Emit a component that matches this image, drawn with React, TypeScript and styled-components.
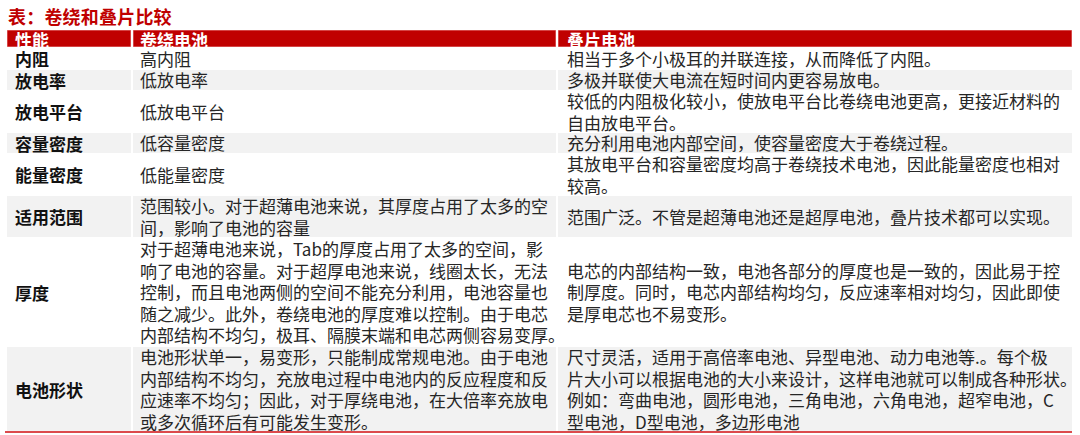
import React, { FunctionComponent } from 'react';
import styled, { createGlobalStyle } from 'styled-components';

const GlobalStyle = createGlobalStyle`
  html, body {
    margin: 0;
    padding: 0;
    background: #fff;
  }
  body {
    font-family: "Microsoft YaHei", "Noto Sans CJK SC", "Noto Sans", sans-serif;
  }
`;

interface Row {
  label: string;
  height: number;
  winding: string[];
  stacked: string[];
}

const rows: Row[] = [
  { label: '内阻', height: 23, winding: ['高内阻'], stacked: ['相当于多个小极耳的并联连接，从而降低了内阻。'] },
  { label: '放电率', height: 20, winding: ['低放电率'], stacked: ['多极并联使大电流在短时间内更容易放电。'] },
  {
    label: '放电平台',
    height: 43,
    winding: ['低放电平台'],
    stacked: ['较低的内阻极化较小，使放电平台比卷绕电池更高，更接近材料的', '自由放电平台。'],
  },
  { label: '容量密度', height: 20, winding: ['低容量密度'], stacked: ['充分利用电池内部空间，使容量密度大于卷绕过程。'] },
  {
    label: '能量密度',
    height: 43,
    winding: ['低能量密度'],
    stacked: ['其放电平台和容量密度均高于卷绕技术电池，因此能量密度也相对', '较高。'],
  },
  {
    label: '适用范围',
    height: 41,
    winding: ['范围较小。对于超薄电池来说，其厚度占用了太多的空', '间，影响了电池的容量'],
    stacked: ['范围广泛。不管是超薄电池还是超厚电池，叠片技术都可以实现。'],
  },
  {
    label: '厚度',
    height: 110,
    winding: [
      '对于超薄电池来说，Tab的厚度占用了太多的空间，影',
      '响了电池的容量。对于超厚电池来说，线圈太长，无法',
      '控制，而且电池两侧的空间不能充分利用，电池容量也',
      '随之减少。此外，卷绕电池的厚度难以控制。由于电芯',
      '内部结构不均匀，极耳、隔膜末端和电芯两侧容易变厚。',
    ],
    stacked: [
      '电芯的内部结构一致，电池各部分的厚度也是一致的，因此易于控',
      '制厚度。同时，电芯内部结构均匀，反应速率相对均匀，因此即使',
      '是厚电芯也不易变形。',
    ],
  },
  {
    label: '电池形状',
    height: 84,
    winding: [
      '电池形状单一，易变形，只能制成常规电池。由于电池',
      '内部结构不均匀，充放电过程中电池内的反应程度和反',
      '应速率不均匀；因此，对于厚绕电池，在大倍率充放电',
      '或多次循环后有可能发生变形。',
    ],
    stacked: [
      '尺寸灵活，适用于高倍率电池、异型电池、动力电池等.。每个极',
      '片大小可以根据电池的大小来设计，这样电池就可以制成各种形状。',
      '例如：弯曲电池，圆形电池，三角电池，六角电池，超窄电池，C',
      '型电池，D型电池，多边形电池',
    ],
  },
];

const Page = styled.div`
  padding: 4px 8px 0 7px;
  width: 1065px;
`;

const Title = styled.div`
  color: #c00000;
  font-weight: 700;
  font-size: 18px;
  line-height: 24px;
  height: 26px;
  padding-left: 1px;
  letter-spacing: 0.2px;
`;

const Grid = styled.div`
  display: grid;
  grid-template-columns: 124px 423px 514px;
  column-gap: 2px;
  border-bottom: 2px solid #dc4a4c;
  margin-left: -2px;
  padding-left: 2px;
`;

const HeadCell = styled.div<{ pad: number }>`
  background: #c00000;
  color: #fff;
  font-weight: 700;
  font-size: 17px;
  line-height: 20px;
  height: 17px;
  overflow: hidden;
  padding-left: ${({ pad }) => pad}px;
  box-shadow: inset 0 0 0 0.5px #e98a8a;
`;

const Cell = styled.div<{ shaded: boolean; h: number; pad: number }>`
  background: ${({ shaded }) => (shaded ? '#f2f2f2' : '#fff')};
  height: ${({ h }) => h}px;
  display: flex;
  flex-direction: column;
  justify-content: center;
  padding-left: ${({ pad }) => pad}px;
  overflow: hidden;
`;

const Label = styled.span`
  font-weight: 700;
  font-size: 17px;
  color: #111;
  line-height: 21px;
`;

const Line = styled.span`
  display: block;
  white-space: nowrap;
  font-size: 17px;
  line-height: 21.5px;
  color: #262626;
`;

const App: FunctionComponent = () => (
  <>
    <GlobalStyle />
    <Page>
      <Title>表：卷绕和叠片比较</Title>
      <Grid>
        <HeadCell pad={8}>性能</HeadCell>
        <HeadCell pad={7}>卷绕电池</HeadCell>
        <HeadCell pad={9}>叠片电池</HeadCell>
        {rows.map((row, i) => {
          const shaded = i % 2 === 1;
          return (
            <React.Fragment key={row.label}>
              <Cell shaded={shaded} h={row.height} pad={8}>
                <Label>{row.label}</Label>
              </Cell>
              <Cell shaded={shaded} h={row.height} pad={7}>
                {row.winding.map(line => (
                  <Line key={line}>{line}</Line>
                ))}
              </Cell>
              <Cell shaded={shaded} h={row.height} pad={9}>
                {row.stacked.map(line => (
                  <Line key={line}>{line}</Line>
                ))}
              </Cell>
            </React.Fragment>
          );
        })}
      </Grid>
    </Page>
  </>
);

export default App;
